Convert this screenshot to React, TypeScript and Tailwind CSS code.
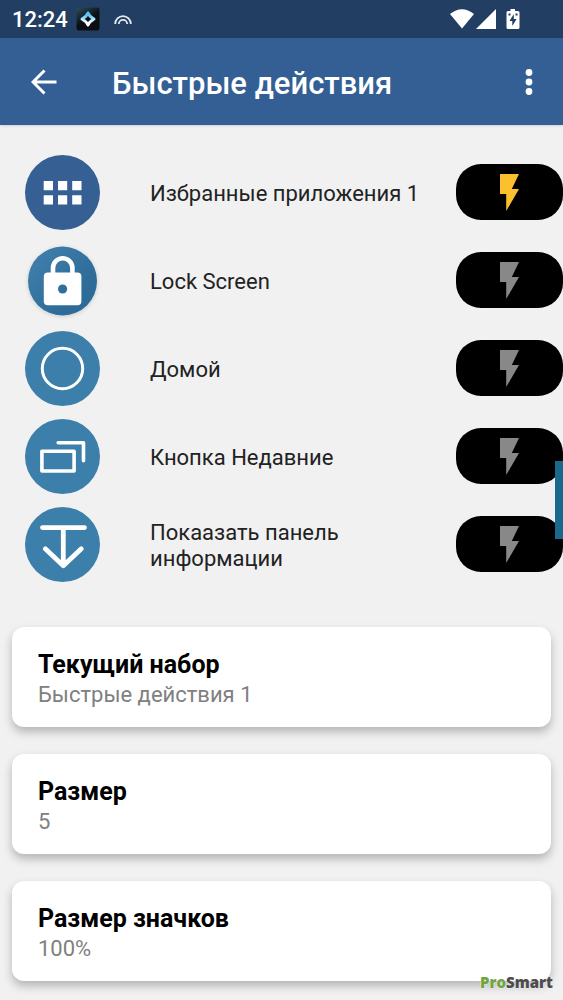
import { useId, useState, type ReactNode } from "react";

interface QuickAction {
  readonly enabled: boolean;
  readonly icon: ReactNode;
  readonly label: string;
}

const actions: ReadonlyArray<QuickAction> = [
  { enabled: true, icon: <AppsIcon />, label: "Избранные приложения 1" },
  { enabled: false, icon: <LockIcon />, label: "Lock Screen" },
  { enabled: false, icon: <HomeIcon />, label: "Домой" },
  { enabled: false, icon: <RecentsIcon />, label: "Кнопка Недавние" },
  { enabled: false, icon: <PanelIcon />, label: "Покаазать панель информации" },
];

const settings: ReadonlyArray<{ readonly title: string; readonly value: string }> = [
  { title: "Текущий набор", value: "Быстрые действия 1" },
  { title: "Размер", value: "5" },
  { title: "Размер значков", value: "100%" },
];

function AppsIcon() {
  return (
    <svg aria-hidden="true" className="size-[75px]" viewBox="0 0 75 75">
      <circle cx="37.5" cy="37.5" fill="#365f93" r="37.5" />
      <g fill="#fff">
        <path d="M18.7 26h9.3v9.2h-9.3zM33 26h9.2v9.2H33zM47.2 26h9.3v9.2h-9.3z" />
        <path d="M18.7 40.2h9.3v9.4h-9.3zM33 40.2h9.2v9.4H33zM47.2 40.2h9.3v9.4h-9.3z" />
      </g>
    </svg>
  );
}

function LockIcon() {
  return (
    <svg aria-hidden="true" className="size-[75px] drop-shadow-sm" viewBox="0 0 75 75">
      <defs>
        <linearGradient id="lock-fill" x1="0" x2="1" y1="0" y2="1">
          <stop offset="0.2" stopColor="#3d7ba8" />
          <stop offset="0.7" stopColor="#2d6b98" />
        </linearGradient>
      </defs>
      <circle cx="37.5" cy="38" fill="url(#lock-fill)" r="34.5" />
      <path d="M28 31v-6a9.7 9.700 0 0 1 19.400 0v6" fill="none" stroke="#fff" strokeWidth="4.6" />
      <rect fill="#fff" height="32.7" rx="4" width="37.6" x="18.8" y="29.5" />
      <circle cx="37.6" cy="46" fill="#2f6f9c" r="4.6" />
    </svg>
  );
}

function HomeIcon() {
  return (
    <svg aria-hidden="true" className="size-[75px]" viewBox="0 0 75 75">
      <circle cx="37.5" cy="37.5" fill="#3d7fab" r="37.5" />
      <circle cx="37.5" cy="37.5" fill="none" r="20.2" stroke="#fff" strokeWidth="3" />
    </svg>
  );
}

function RecentsIcon() {
  return (
    <svg aria-hidden="true" className="size-[75px]" viewBox="0 0 75 75">
      <circle cx="37.5" cy="37.5" fill="#3d7fab" r="37.5" />
      <g fill="none" stroke="#fff" strokeLinejoin="round">
        <path d="M33.2 23.8h25.3v18" strokeLinecap="round" strokeWidth="3.6" />
        <path d="M16.9 32.2h32.2v19.8H16.9z" strokeWidth="3.6" />
      </g>
    </svg>
  );
}

function PanelIcon() {
  return (
    <svg aria-hidden="true" className="size-[75px]" viewBox="0 0 75 75">
      <circle cx="37.5" cy="37.5" fill="#3d7fab" r="37.5" />
      <path
        d="M17.5 20.6h42M38.3 21v37.500M20.300 41.800l18 17 18-17"
        fill="none"
        stroke="#fff"
        strokeLinecap="round"
        strokeLinejoin="round"
        strokeWidth="4.8"
      />
    </svg>
  );
}

function StatusBar() {
  return (
    <div className="flex h-[38px] items-center bg-[#223f63] pr-[43px] pl-3 text-white">
      <span className="pt-0.5 text-[22px] leading-6 font-medium">12:24</span>
      <svg aria-hidden="true" className="ml-2 size-6" viewBox="0 0 24 24">
        <defs>
          <linearGradient id="app-back" x1="0" x2="0.6" y1="0" y2="1">
            <stop offset="0" stopColor="#28505f" />
            <stop offset="0.6" stopColor="#0b0f14" />
          </linearGradient>
          <linearGradient id="app-mark" x1="0" x2="0" y1="0" y2="1">
            <stop offset="0.2" stopColor="#5cc4f5" />
            <stop offset="0.8" stopColor="#fff" />
          </linearGradient>
        </defs>
        <rect fill="url(#app-back)" height="23" rx="2" width="23" x="0.5" y="0.5" />
        <path
          d="M12 6Q13.500 9.500 18 12Q13.500 14.500 12 18Q10.500 14.500 6 12Q10.500 9.500 12 6z"
          fill="none"
          stroke="url(#app-mark)"
          strokeLinejoin="round"
          strokeWidth="3"
        />
      </svg>
      <svg aria-hidden="true" className="ml-3.5 h-3 w-[18px]" viewBox="0 0 18 12">
        <g fill="none" stroke="#e3e9f0" strokeWidth="1.8">
          <path d="M1.2 11a7.8 7.8 0 0 1 15.6 0" />
          <path d="M4.8 11a4.2 4.2 0 0 1 8.4 0" />
        </g>
      </svg>
      <svg aria-hidden="true" className="ml-auto h-5 w-6" fill="#fff" viewBox="0 0 24 20">
        <path d="M0 5Q12-4.500 24 5L12 19.500z" />
      </svg>
      <svg aria-hidden="true" className="ml-0.5 size-5" fill="#fff" viewBox="0 0 20 20">
        <path d="M20 0v20H0z" />
      </svg>
      <svg aria-hidden="true" className="ml-2.5 h-5 w-[14px]" viewBox="0 0 14 20">
        <path d="M4.500 0h4.500v2H12q1.500 0 1.500 1.500v15Q13.500 20 12 20H2Q.500 20 .500 18.500v-15Q.500 2 2 2h2.500z" fill="#fff" />
        <path d="M7.800 5L3.500 12h2.800v5l4.300-7H7.800z" fill="#223f63" />
        <path d="M2.500 4.500h2v2h-2zM9.500 4.500h2v2h-2z" fill="#223f63" />
      </svg>
    </div>
  );
}

function Header() {
  return (
    <header className="flex h-[87px] items-center bg-[#335f94] pr-5 pl-6 text-white shadow-sm">
      <button aria-label="Назад" className="flex size-10 items-center justify-center" type="button">
        <svg aria-hidden="true" className="size-[26px]" fill="none" viewBox="0 0 26 26">
          <path d="M25.5 13H2M13.5 1.5L2 13l11.5 11.5" stroke="#fff" strokeWidth="3" />
        </svg>
      </button>
      <h1 className="ml-12 flex-1 pt-1 text-[31px] leading-9 font-medium">Быстрые действия</h1>
      <button aria-label="Ещё" className="flex h-10 w-7 items-center justify-center" type="button">
        <svg aria-hidden="true" className="h-[26px] w-2" fill="#fff" viewBox="0 0 8 26">
          <circle cx="4" cy="3.5" r="3.4" />
          <circle cx="4" cy="13" r="3.4" />
          <circle cx="4" cy="22.5" r="3.4" />
        </svg>
      </button>
    </header>
  );
}

function ActionRow({ action }: { readonly action: QuickAction }) {
  const inputId = useId();
  const [enabled, setEnabled] = useState(action.enabled);

  return (
    <li className="flex h-22 items-center pl-[25px]">
      {action.icon}
      <label className="ml-[50px] flex-1 pt-1 pr-8 text-[22px] leading-[26px] text-[#222]" htmlFor={inputId}>
        {action.label}
      </label>
      <label className="flex h-14 w-[107px] cursor-pointer items-center justify-center rounded-[25px] bg-black">
        <input
          checked={enabled}
          className="sr-only"
          id={inputId}
          onChange={(event) => setEnabled(event.target.checked)}
          type="checkbox"
        />
        <svg
          aria-hidden="true"
          className={enabled ? "h-[37px] w-[19px] text-[#fbc02d]" : "h-[37px] w-[19px] text-[#888]"}
          fill="currentColor"
          viewBox="0 0 19 37"
        >
          <path d="M0 0h19l-7.200 15H19L6.200 37V20H0z" />
        </svg>
      </label>
    </li>
  );
}

export default function App() {
  return (
    <div className="relative min-h-screen bg-[#f1f1f1] font-[Roboto,sans-serif]">
      <StatusBar />
      <Header />
      <main>
        <ul className="pt-[23px]">
          {actions.map((action) => (
            <ActionRow action={action} key={action.label} />
          ))}
        </ul>

        <div className="mt-[39px] space-y-[27px] px-3 pb-[18px]">
          {settings.map((setting) => (
            <button
              className="block w-full rounded-xl bg-white px-[26px] pt-[21px] pb-[18px] text-left shadow-[0_5px_10px_rgba(0,0,0,0.25)]"
              key={setting.title}
              type="button"
            >
              <span className="block text-[25px] leading-[33px] font-bold text-black">{setting.title}</span>
              <span className="block text-[22px] leading-7 text-[#808080]">{setting.value}</span>
            </button>
          ))}
        </div>
      </main>

      <div className="fixed top-1/2 right-0 h-[78px] w-2 -translate-y-1/2 bg-[#1a698c]" />
      <div className="absolute right-2.5 bottom-2 font-['Open_Sans',sans-serif] text-[15px] leading-5 font-extrabold text-[#4c4c4c] [text-shadow:0_0_2px_#fff]">
        <span className="text-[#70a544]">Pro</span>Smart
      </div>
    </div>
  );
}
